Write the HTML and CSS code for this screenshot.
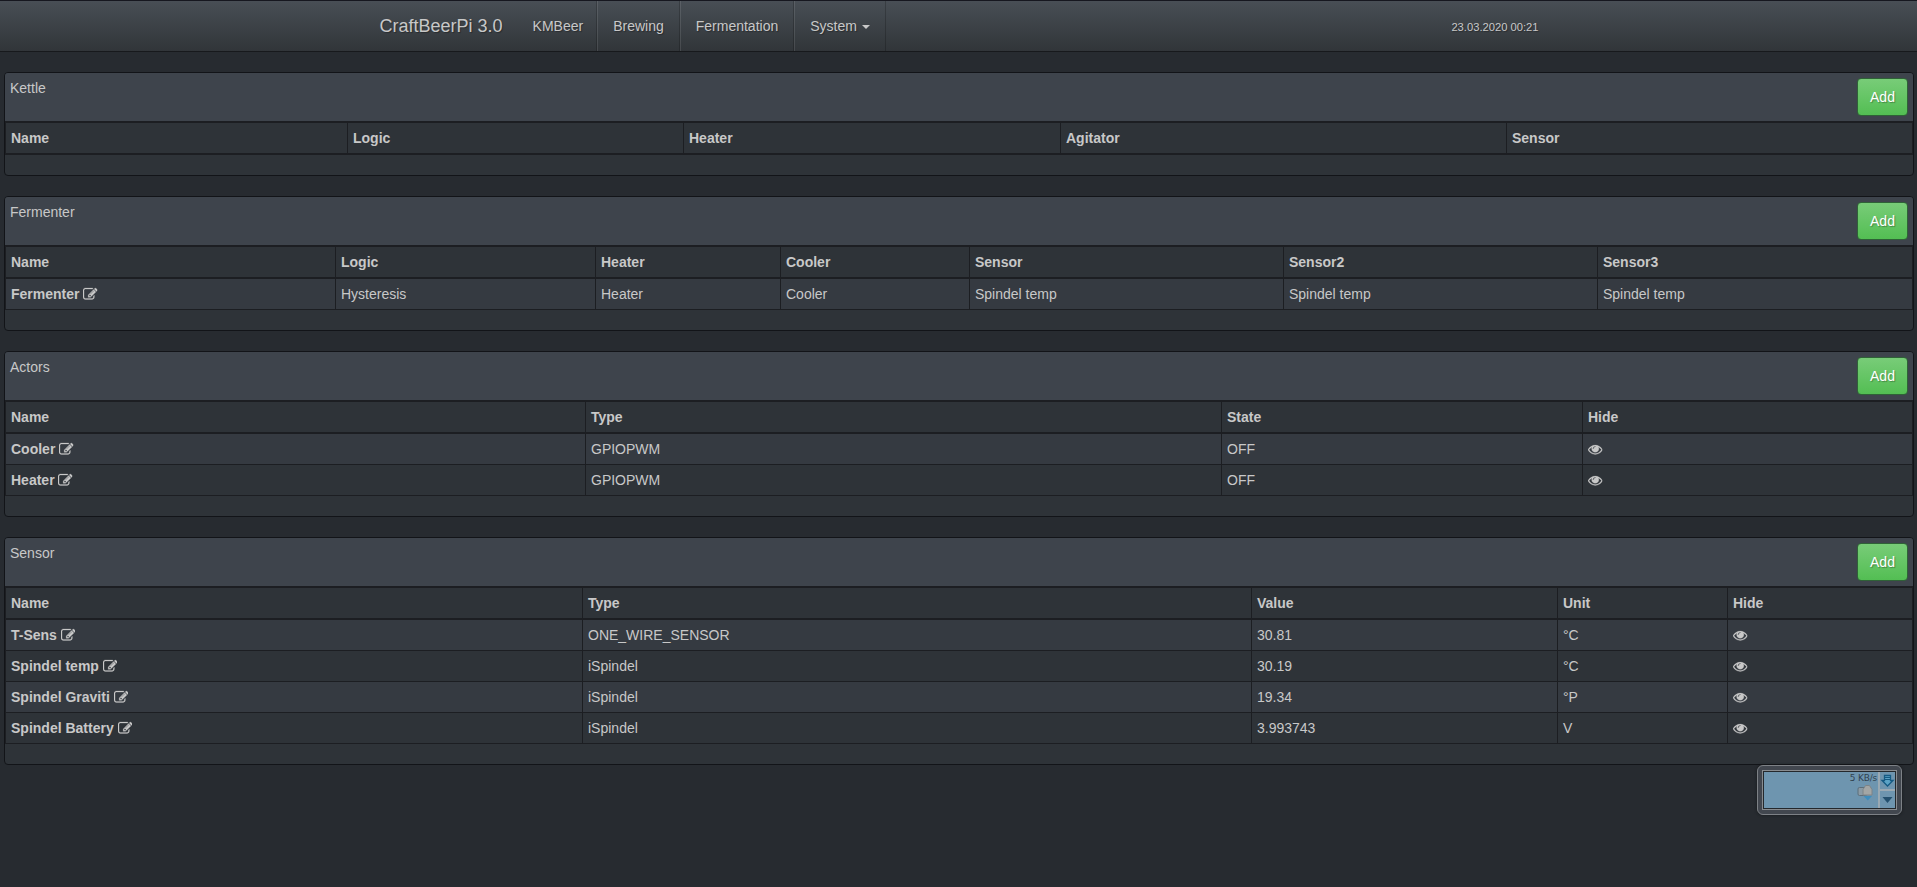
FILE: index.html
```html
<!DOCTYPE html>
<html lang="en">
<head>
<meta charset="utf-8">
<title>CraftBeerPi 3.0</title>
<link rel="stylesheet" href="styles.css">
</head>
<body>
<svg class="sprite" aria-hidden="true">
  <symbol id="edit" viewBox="0 0 1792 1792"><path d="M888 1184l116-116-152-152-116 116v56h96v96h56zm440-720q-16-16-33 1l-350 350q-17 17-1 33t33-1l350-350q17-17 1-33zm80 594v190q0 119-84.500 203.500t-203.500 84.500h-832q-119 0-203.500-84.500t-84.500-203.500v-832q0-119 84.500-203.500t203.500-84.500h832q63 0 117 25 15 7 18 23 3 17-9 29l-49 49q-14 14-32 8-23-6-45-6h-832q-66 0-113 47t-47 113v832q0 66 47 113t113 47h832q66 0 113-47t47-113v-126q0-13 9-22l64-64q15-15 35-7t20 29zm-96-738l288 288-672 672h-288v-288zm444 132l-92 92-288-288 92-92q28-28 68-28t68 28l152 152q28 28 28 68t-28 68z"/></symbol>
  <symbol id="eye" viewBox="0 0 1792 1792"><path d="M1664 960q-152-236-381-353 61 104 61 225 0 185-131.500 316.500t-316.500 131.500-316.500-131.500-131.500-316.500q0-121 61-225-229 117-381 353 133 205 333.500 326.500t434.500 121.500 434.500-121.500 333.500-326.500zm-720-384q0-20-14-34t-34-14q-125 0-214.500 89.500t-89.500 214.500q0 20 14 34t34 14 34-14 14-34q0-86 61-147t147-61q20 0 34-14t14-34zm848 384q0 34-20 69-140 230-376.500 368.500t-499.500 138.500-499.500-139-376.500-368q-20-35-20-69t20-69q140-229 376.500-368t499.500-139 499.500 139 376.500 368q20 35 20 69z"/></symbol>
</svg>

<nav class="navbar">
  <div class="navbar-inner">
    <a class="brand">CraftBeerPi 3.0</a>
    <ul class="nav">
      <li>KMBeer</li>
      <li>Brewing</li>
      <li>Fermentation</li>
      <li>System <span class="caret"></span></li>
    </ul>
    <span class="clock">23.03.2020 00:21</span>
  </div>
</nav>

<main class="content">
  <section class="panel">
    <header class="panel-heading"><span>Kettle</span><button class="btn">Add</button></header>
    <table class="table kettle">
      <colgroup><col class="c1"><col class="c2"><col class="c3"><col class="c4"><col></colgroup>
      <thead><tr><th>Name</th><th>Logic</th><th>Heater</th><th>Agitator</th><th>Sensor</th></tr></thead>
    </table>
  </section>

  <section class="panel">
    <header class="panel-heading"><span>Fermenter</span><button class="btn">Add</button></header>
    <table class="table fermenter">
      <colgroup><col class="c1"><col class="c2"><col class="c3"><col class="c4"><col class="c5"><col class="c6"><col></colgroup>
      <thead><tr><th>Name</th><th>Logic</th><th>Heater</th><th>Cooler</th><th>Sensor</th><th>Sensor2</th><th>Sensor3</th></tr></thead>
      <tbody>
        <tr><th>Fermenter <svg class="icon"><use href="#edit"/></svg></th><td>Hysteresis</td><td>Heater</td><td>Cooler</td><td>Spindel temp</td><td>Spindel temp</td><td>Spindel temp</td></tr>
      </tbody>
    </table>
  </section>

  <section class="panel">
    <header class="panel-heading"><span>Actors</span><button class="btn">Add</button></header>
    <table class="table actors">
      <colgroup><col class="c1"><col class="c2"><col class="c3"><col></colgroup>
      <thead><tr><th>Name</th><th>Type</th><th>State</th><th>Hide</th></tr></thead>
      <tbody>
        <tr><th>Cooler <svg class="icon"><use href="#edit"/></svg></th><td>GPIOPWM</td><td>OFF</td><td><svg class="icon"><use href="#eye"/></svg></td></tr>
        <tr><th>Heater <svg class="icon"><use href="#edit"/></svg></th><td>GPIOPWM</td><td>OFF</td><td><svg class="icon"><use href="#eye"/></svg></td></tr>
      </tbody>
    </table>
  </section>

  <section class="panel">
    <header class="panel-heading"><span>Sensor</span><button class="btn">Add</button></header>
    <table class="table sensor">
      <colgroup><col class="c1"><col class="c2"><col class="c3"><col class="c4"><col></colgroup>
      <thead><tr><th>Name</th><th>Type</th><th>Value</th><th>Unit</th><th>Hide</th></tr></thead>
      <tbody>
        <tr><th>T-Sens <svg class="icon"><use href="#edit"/></svg></th><td>ONE_WIRE_SENSOR</td><td>30.81</td><td>°C</td><td><svg class="icon"><use href="#eye"/></svg></td></tr>
        <tr><th>Spindel temp <svg class="icon"><use href="#edit"/></svg></th><td>iSpindel</td><td>30.19</td><td>°C</td><td><svg class="icon"><use href="#eye"/></svg></td></tr>
        <tr><th>Spindel Graviti <svg class="icon"><use href="#edit"/></svg></th><td>iSpindel</td><td>19.34</td><td>°P</td><td><svg class="icon"><use href="#eye"/></svg></td></tr>
        <tr><th>Spindel Battery <svg class="icon"><use href="#edit"/></svg></th><td>iSpindel</td><td>3.993743</td><td>V</td><td><svg class="icon"><use href="#eye"/></svg></td></tr>
      </tbody>
    </table>
  </section>
</main>

<aside class="gadget">
  <div class="gadget-screen">
    <div class="gadget-main">
      <span class="rate">5 KB/s</span>
      <svg class="drive" viewBox="0 0 16 17">
        <rect x="1" y="3.500" width="9" height="8" rx="1.500" fill="#8b9ba5" stroke="#5d6e7a"/>
        <path d="M6 5.500 8.500 1.500h4L15 5.500v5.500H6z" fill="#a3a6a5" stroke="#7d8488"/>
        <path d="M6.500 12h8.500l-4.200 4.500z" fill="#3f8dbd"/>
      </svg>
    </div>
    <div class="gadget-side">
      <svg viewBox="0 0 14 17"><path d="M4 3.500h6v5h2.500L7 14 1.500 8.500H4z" fill="#5ba3c6" stroke="#155a83" stroke-width="1.300"/><path d="M4 5.500h6M4 7.500h6" stroke="#155a83"/></svg>
      <svg viewBox="0 0 14 17"><path d="M2 6h10l-5 6z" fill="#24506e"/></svg>
    </div>
  </div>
</aside>
</body>
</html>
```
FILE: styles.css
```css
* { box-sizing: border-box; }

body {
  margin: 0;
  height: 887px;
  overflow: hidden;
  background: #272b30;
  color: #c8c8c8;
  font: 14px/20px "Liberation Sans", Arial, sans-serif;
}

.sprite { display: none; }

.navbar {
  height: 52px;
  margin-bottom: 20px;
  border-top: 1px solid #16171f;
  border-bottom: 1px solid #17191c;
  background: linear-gradient(#484e55, #3a3f44 60%, #313539);
  text-shadow: 1px 1px 1px rgba(0, 0, 0, 0.3);
}

.navbar-inner {
  display: flex;
  width: 1170px;
  height: 50px;
  margin: 0 auto;
  line-height: 50px;
}

.brand {
  padding: 0 15px 0 6px;
  font-size: 18px;
}

.nav {
  display: flex;
  margin: 0;
  padding: 0;
  list-style: none;
}

.nav li {
  padding: 0 15px;
  border-right: 1px solid rgba(0, 0, 0, 0.2);
  border-left: 1px solid rgba(255, 255, 255, 0.1);
}

.nav li:first-child {
  padding-right: 13px;
  border-left: 0;
}

.caret {
  display: inline-block;
  margin-left: 1px;
  border: 4px solid transparent;
  border-top-color: #c8c8c8;
  border-bottom: 0;
  vertical-align: middle;
}

.clock {
  margin-left: auto;
  padding: 1px 5px 0 0;
  font-size: 11.2px;
}

.content { padding: 0 3px 0 4px; }

.panel {
  margin-bottom: 20px;
  padding-bottom: 20px;
  border: 1px solid #121418;
  border-radius: 4px;
  background: #2e3338;
}

.panel-heading {
  display: flex;
  justify-content: space-between;
  align-items: flex-start;
  height: 49px;
  padding: 5px;
  border-bottom: 1px solid #1c1e22;
  border-radius: 3px 3px 0 0;
  background: #3e444c;
}

.btn {
  width: 51px;
  height: 38px;
  padding: 0;
  border: 1px solid #2f6237;
  border-radius: 4px;
  background: linear-gradient(#78cc78, #62c462 60%, #53be53);
  color: #fff;
  font: inherit;
  text-shadow: 1px 1px 1px rgba(0, 0, 0, 0.3);
}

.table {
  width: 100%;
  border-collapse: collapse;
  table-layout: fixed;
}

.table th,
.table td {
  height: 31px;
  padding: 5px;
  border: 1px solid #1c1e22;
  text-align: left;
  white-space: nowrap;
}

.table thead th { border-bottom-width: 2px; }
.table tbody tr:nth-child(odd) { background: #353a41; }

.kettle .c1 { width: 342px; }
.kettle .c2 { width: 336px; }
.kettle .c3 { width: 377px; }
.kettle .c4 { width: 446px; }

.fermenter .c1 { width: 330px; }
.fermenter .c2 { width: 260px; }
.fermenter .c3 { width: 185px; }
.fermenter .c4 { width: 189px; }
.fermenter .c5 { width: 314px; }
.fermenter .c6 { width: 314px; }

.actors .c1 { width: 580px; }
.actors .c2 { width: 636px; }
.actors .c3 { width: 361px; }

.sensor .c1 { width: 577px; }
.sensor .c2 { width: 669px; }
.sensor .c3 { width: 306px; }
.sensor .c4 { width: 170px; }

.icon {
  width: 14.5px;
  height: 14.5px;
  fill: #c8c8c8;
  stroke: #c8c8c8;
  stroke-width: 30;
  vertical-align: -2px;
}

/* Desktop widget floating over the page */
.gadget {
  position: absolute;
  left: 1757px;
  top: 765px;
  width: 145px;
  height: 50px;
  padding: 4px;
  border: 1px solid #7d8186;
  border-radius: 6px;
  background: #42474f;
  box-shadow: 0 0 3px #15171a;
}

.gadget-screen {
  display: flex;
  height: 40px;
  padding: 1px;
  border: 1px solid #888c90;
  outline: 1px solid #24282c;
  outline-offset: -2px;
  background: #9aa9b3;
}

.gadget-main {
  display: flex;
  flex: 1;
  flex-direction: column;
  align-items: flex-end;
  background: #6e95af;
}

.rate {
  padding: 1px 1px 0 0;
  color: #30424f;
  font: 9px/11px "DejaVu Sans", sans-serif;
  letter-spacing: -0.2px;
}

.drive { width: 16px; height: 17px; margin-right: 5px; }

.gadget-side {
  display: grid;
  grid-template-rows: 1fr 1fr;
  gap: 2px;
  width: 17px;
  padding-left: 2px;
}

.gadget-side svg { width: 15px; height: 17px; background: #6e95af; }
```
